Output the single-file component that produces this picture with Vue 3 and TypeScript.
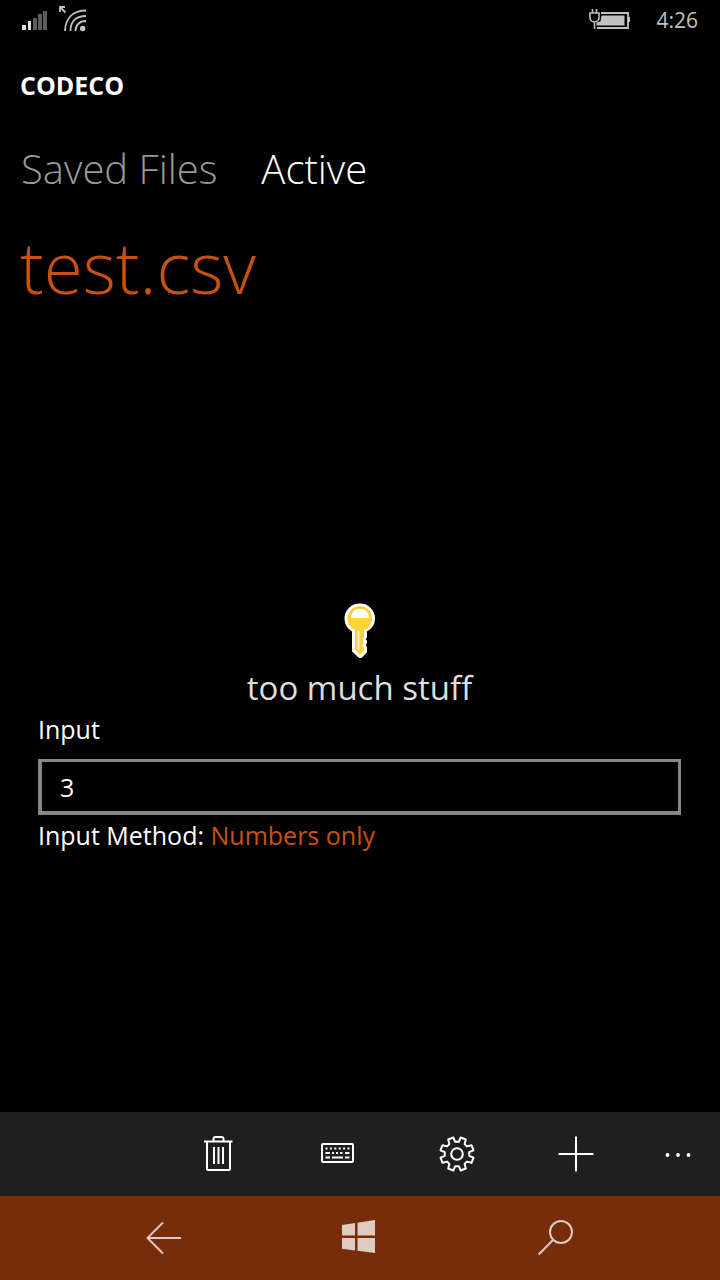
<script setup lang="ts">
import { ref } from 'vue'

const tabs = ['Saved Files', 'Active']
const activeTab = ref('Active')
const value = ref('3')
</script>

<template>
  <div class="screen">
    <header class="status">
      <svg class="signal" width="26" height="20" viewBox="0 0 26 20" aria-label="Signal">
        <path d="M0 15h4v5H0zM6 11h3v9H6z" fill="#dedede" />
        <path d="M11 8h4v12h-4zM16 4h4v16h-4zM21 1h4v19h-4z" fill="#5c5c5c" />
      </svg>
      <svg class="wifi" width="28" height="26" viewBox="0 0 28 26" aria-label="Wi-Fi">
        <g fill="none" stroke="#c0c0c0" stroke-width="1.8">
          <path d="M6 25C6.500 12 14 4.500 27 4.500M11.500 25c0-10 6-15 15.500-15M16.500 25c0-6 4-10 10.500-10" />
          <path d="M1 6V1h5M1 1l5.500 5.500" />
        </g>
        <circle cx="23.700" cy="22.500" r="2.700" fill="#c8c8c8" />
      </svg>
      <svg class="battery" width="42" height="24" viewBox="0 0 42 24" aria-label="Battery charging">
        <path d="M12 5h27v15H8" fill="none" stroke="#c0c0c0" stroke-width="1.800" />
        <path d="M12.500 7.500H35.500v10H7.500v-3l4-1z" fill="#c0c0c0" />
        <path d="M39 9h2v5h-2z" fill="#c0c0c0" />
        <path d="M1 5h9v5c0 2-2 4-4.500 4S1 12 1 10zM3.500 1v4M7.500 1v4M5.500 14v7" fill="#000" stroke="#c0c0c0" stroke-width="1.600" />
      </svg>
      <time class="clock">4:26</time>
    </header>

    <h1 class="brand">CODECO</h1>

    <nav class="tabs">
      <button
        v-for="tab in tabs"
        :key="tab"
        type="button"
        :class="['tab', { current: tab === activeTab }]"
        @click="activeTab = tab"
      >{{ tab }}</button>
    </nav>

    <h2 class="file">test.csv</h2>

    <main class="content">
      <svg class="key" width="32" height="56" viewBox="0 0 32 56" aria-hidden="true">
        <path
          d="M16 1.500C7.500 1.500 1.500 8 1.500 15.500c0 6 3 10 7.500 12.500v20l6.500 6h1.500l5-5v-5l-1.500-2 1.500-2v-2l-1.500-2 1.500-2v-6c4.500-2.500 8-6.500 8-12.500C30 8 24 1.500 16 1.500z"
          fill="#fff" stroke="#fff" stroke-width="2" stroke-linejoin="round"
        />
        <path
          d="M16 3C9 3 3.500 8.500 3.500 15.500c0 5.500 3 9.500 7.500 11.500v20l5 5 4-4v-3l-2-2.500 2-2.500-1-2.500 1-2V27c5-2 8-6 8-11.500C28 8.500 23 3 16 3z"
          fill="#ffd23b"
        />
        <path d="M7 15C7 2.500 25 2.500 25 15z" fill="#fff" />
        <path d="M14.500 28v19" stroke="#fff" stroke-width="1.500" />
      </svg>
      <p class="caption">too much stuff</p>
      <form class="form" @submit.prevent>
        <label class="text" for="entry">Input</label>
        <input id="entry" v-model="value" class="entry" type="text" inputmode="numeric" />
        <p class="text">Input Method: <a class="method" href="#method">Numbers only</a></p>
      </form>
    </main>

    <footer>
      <div class="commands">
        <button type="button" class="command" aria-label="Delete">
          <svg width="36" height="36" viewBox="0 0 36 36" fill="none" stroke="#fff" stroke-width="2">
            <path d="M3 5.500h28.500M6 6v27q0 1 1 1h21q1 0 1-1V6M12.500 5V3q0-2 2-2h6q2 0 2 2v2" />
            <path d="M13 11v17M17.500 11v17M22 11v17" />
          </svg>
        </button>
        <button type="button" class="command" aria-label="Keyboard">
          <svg width="36" height="36" viewBox="0 0 36 36" fill="none" stroke="#fff" stroke-width="2">
            <rect x="2" y="8" width="31" height="18" rx="1" />
            <path d="M5.500 12.500h24" stroke-dasharray="2 2.400" />
            <path d="M5.500 17h4.500M12 17h2M16 17h2M20 17h2.500M25 17h4.500M5.500 21.500h4.500M12 21.500h11M25 21.500h4.500" />
          </svg>
        </button>
        <button type="button" class="command" aria-label="Settings">
          <svg width="36" height="36" viewBox="-18 -18 36 36" fill="none" stroke="#fff" stroke-width="2" stroke-linejoin="round">
            <path
              d="M-1.800-12.200L-3.700-16.500-8.800-14.500-7.600-9.900-9.900-7.600-14.500-8.800-16.500-3.700-12.200-1.800V1.800L-16.500 3.700-14.500 8.800-9.900 7.600-7.600 9.900-8.800 14.500-3.700 16.500-1.800 12.200H1.800L3.700 16.500 8.800 14.500 7.600 9.900 9.900 7.600 14.500 8.800 16.500 3.700 12.200 1.800V-1.800L16.500-3.700 14.500-8.800 9.900-7.600 7.600-9.900 8.800-14.500 3.700-16.500 1.800-12.200z"
            />
            <circle r="5.800" />
          </svg>
        </button>
        <button type="button" class="command" aria-label="Add">
          <svg width="36" height="36" viewBox="0 0 36 36" stroke="#fff" stroke-width="2">
            <path d="M.5 18h35M18 .5v35" />
          </svg>
        </button>
        <button type="button" class="more" aria-label="More">
          <svg width="36" height="36" viewBox="0 0 36 36" fill="#fff">
            <circle cx="7.500" cy="19" r="1.900" />
            <circle cx="18" cy="19" r="1.900" />
            <circle cx="28.500" cy="19" r="1.900" />
          </svg>
        </button>
      </div>
      <div class="system">
        <button type="button" class="sys" aria-label="Back">
          <svg width="36" height="36" viewBox="0 0 36 36" fill="none" stroke="#decbc2" stroke-width="2">
            <path d="M35 18H2M17 2.500L1.500 18 17 33.500" />
          </svg>
        </button>
        <button type="button" class="sys" aria-label="Start">
          <svg width="36" height="36" viewBox="0 0 36 36" fill="#decbc2">
            <path d="M0 5l13-2v12.500H0zM15.500 2.700L33 0v15.500H15.500zM0 18h13v12.500L0 28.700zM15.500 18H33v15l-17.500-2.300z" />
          </svg>
        </button>
        <button type="button" class="sys" aria-label="Search">
          <svg width="36" height="36" viewBox="0 0 36 36" fill="none" stroke="#decbc2" stroke-width="2">
            <circle cx="23" cy="12" r="11" />
            <path d="M15 20L.7 34.500" />
          </svg>
        </button>
      </div>
    </footer>
  </div>
</template>

<style>
body {
  margin: 0;
  background: #000;
}
</style>

<style scoped>
.screen {
  min-height: 100vh;
  display: flex;
  flex-direction: column;
  background: #000;
  color: #fff;
  font-family: "Open Sans", "Noto Sans", sans-serif;
}

button {
  padding: 0;
  border: 0;
  background: none;
  color: inherit;
  font: inherit;
  cursor: pointer;
}

h1,
h2,
p {
  margin: 0;
}

svg {
  display: block;
  flex: none;
}

.status {
  display: flex;
  align-items: center;
  height: 40px;
  padding: 0 22px;
}

.wifi {
  margin: 0 0 2px 11px;
}

.battery {
  margin-left: auto;
}

.clock {
  margin-left: 25px;
  color: #c0c0c0;
  font-size: 21px;
  font-weight: 400;
}

.brand {
  padding: 27px 20px 0;
  font-size: 25px;
  line-height: 36px;
  font-weight: 700;
}

.tabs {
  display: flex;
  gap: 44px;
  padding: 36px 21px 0;
}

.tab {
  color: #999;
  font-size: 40px;
  line-height: 60px;
  font-weight: 300;
}

.tab.current {
  color: #fff;
}

.file {
  padding: 20px 20px 0;
  color: #ca5010;
  font-size: 71px;
  line-height: 96px;
  font-weight: 300;
}

.content {
  flex: 1;
  display: flex;
  flex-direction: column;
  align-items: center;
  justify-content: center;
  padding: 31px 39px 0 38px;
}

.caption {
  margin-top: 8px;
  color: #dedede;
  font-size: 33px;
  line-height: 42px;
  font-weight: 400;
}

.form {
  align-self: stretch;
  display: flex;
  flex-direction: column;
}

.text {
  font-size: 25px;
  line-height: 40px;
}

.entry {
  margin: 10px 0 0;
  padding: 0 18px;
  height: 56px;
  box-sizing: border-box;
  border: solid #858585;
  border-width: 3px 3px 4px 4px;
  border-radius: 0;
  background: #000;
  color: #fff;
  font: inherit;
  font-size: 25px;
  outline: none;
}

.method {
  color: #ca5010;
  text-decoration: none;
}

.commands,
.system {
  display: flex;
  height: 84px;
}

.commands {
  justify-content: flex-end;
  background: #1f1f1f;
}

.command,
.more,
.sys {
  display: flex;
  align-items: center;
  justify-content: center;
}

.command {
  width: 119px;
}

.more {
  width: 85px;
}

.system {
  padding: 0 66px;
  background: #782d0a;
}

.sys {
  flex: 1;
}
</style>
